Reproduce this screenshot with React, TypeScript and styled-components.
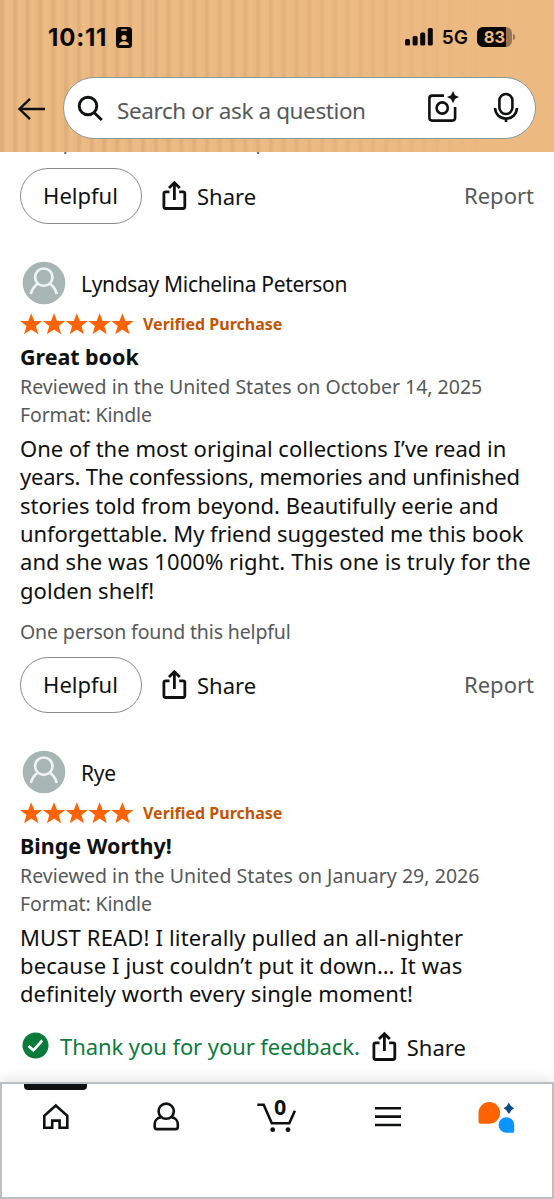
import React from "react";
import styled, { createGlobalStyle } from "styled-components";

const sans = '"Noto Sans", "Open Sans", sans-serif';

const Global = createGlobalStyle`
  * { box-sizing: border-box; }
  body { margin: 0; background: #fff; font-family: ${sans}; color: #0f1111; }
  button { font: inherit; color: inherit; background: none; border: 0; padding: 0; }
`;

const Screen = styled.div`
  width: 554px;
  height: 1199px;
  display: flex;
  flex-direction: column;
  overflow: hidden;
  background: #fff;
`;

const Header = styled.header`
  flex: none;
  height: 152px;
  background:
    linear-gradient(90deg, rgba(236, 185, 129, 0) 0%, rgba(236, 185, 129, 0.3) 50%, rgba(236, 185, 129, 0.92) 88%, #ecb981 100%),
    repeating-linear-gradient(90deg, #e4b37d 0px, #dfad78 1px, #dfad78 3.2px, #e8b781 4.4px, #edbd86 7px, #ebba83 9px, #e9b781 12.8px);
`;

const StatusBar = styled.div`
  height: 77px;
  padding: 0 39px 3px 48px;
  display: flex;
  align-items: center;
  justify-content: space-between;
  color: #0a0704;
`;

const StatusGroup = styled.div`
  display: flex;
  align-items: center;
`;

const Clock = styled.span`
  width: 61px;
  margin-right: 7px;
  padding-top: 1px;
  font: 700 24px/28px Inter, sans-serif;
  letter-spacing: 0.8px;
  white-space: nowrap;
`;

const Network = styled.span`
  margin: 0 9px;
  padding-top: 1px;
  font: 600 19px/24px Inter, sans-serif;
`;

const Battery = styled.div`
  width: 35px;
  height: 20px;
  border-radius: 6px;
  background: linear-gradient(90deg, #0a0704 83%, #987654 83%);
  color: #ecb981;
  font: 700 16.5px/20px Inter, sans-serif;
  text-align: center;
`;

const BatteryTip = styled.i`
  width: 2px;
  height: 6px;
  margin-left: 1px;
  border-radius: 0 2px 2px 0;
  background: #987654;
`;

const SearchRow = styled.div`
  display: flex;
  align-items: center;
  padding: 0 18px 0 17px;
`;

const SearchBox = styled.div`
  width: 474px;
  height: 62px;
  margin-left: 17px;
  padding: 0 16px 0 13px;
  border: 1px solid #8a9a98;
  border-radius: 31px;
  background: #fff;
  display: flex;
  align-items: center;
`;

const Placeholder = styled.span`
  flex: 1;
  margin-left: 13px;
  padding-top: 5px;
  font-size: 22.5px;
  line-height: 30px;
  letter-spacing: -0.4px;
  color: #565959;
  white-space: nowrap;
`;

const Icon = styled.svg`
  display: block;
  flex: none;
  overflow: visible;
`;

const MicIcon = styled(Icon)`
  margin-left: 34px;
`;

const BackIcon = styled(Icon)`
  margin-top: 1px;
`;

const Feed = styled.main`
  flex: 1;
  min-height: 0;
  padding: 0 20px;
  overflow: hidden;
`;

const Line = styled.div<{ $ls?: number }>`
  white-space: nowrap;
  letter-spacing: ${(p) => p.$ls ?? 0}px;
`;

const HelpfulCount = styled(Line)`
  height: 28px;
  font-size: 19.5px;
  line-height: 28px;
  color: #565959;
`;

const Clipped = styled.div`
  height: 16px;
  overflow: hidden;
  display: flex;
  flex-direction: column;
  justify-content: flex-end;
  padding-bottom: 12px;
`;

const Actions = styled.div`
  display: flex;
  align-items: center;
  height: 56px;
`;

const Pill = styled.button`
  && {
    width: 122px;
    height: 56px;
    border: 1px solid #888c8c;
    border-radius: 28px;
    font-size: 22px;
    line-height: 30px;
    padding: 0 1px 2px 0;
  }
`;

const ShareButton = styled.button<{ $gap: number }>`
  && {
    display: flex;
    align-items: center;
    gap: 10px;
    margin-left: ${(p) => p.$gap}px;
    font-size: 22px;
    line-height: 30px;
  }
`;

const Report = styled.button`
  && {
    margin-left: auto;
    font-size: 22px;
    line-height: 30px;
    color: #565959;
    padding-bottom: 2px;
  }
`;

const Review = styled.article`
  display: flex;
  flex-direction: column;
`;

const Author = styled.div`
  display: flex;
  align-items: center;
  height: 44px;
  margin-top: 37px;
  padding-left: 2px;
  gap: 15px;
  font-size: 21px;
`;

const AuthorName = styled(Line)`
  padding-top: 2px;
`;

const Rating = styled.div`
  display: flex;
  align-items: center;
  height: 26px;
  margin-top: 6px;
`;

const Verified = styled(Line)`
  margin-left: 10px;
  font-size: 16px;
  font-weight: 700;
  color: #c45500;
`;

const Title = styled(Line)`
  margin-top: 5px;
  height: 31px;
  font-size: 21.5px;
  line-height: 30px;
  font-weight: 700;
`;

const Meta = styled(Line)`
  height: 28.4px;
  font-size: 19.5px;
  line-height: 28.4px;
  color: #565959;
`;

const Body = styled.div`
  margin-top: 4px;
  font-size: 22px;
  line-height: 28.4px;
`;

const Thanks = styled(Line)`
  margin-left: 11px;
  font-size: 22px;
  line-height: 30px;
  color: #0b7b3c;
`;

const TabBar = styled.nav`
  flex: none;
  height: 117px;
  border: 2px solid #babfc5;
  box-shadow: 0 -3px 12px rgba(0, 0, 0, 0.1);
  background: #fff;
  display: grid;
  grid-template-columns: repeat(5, 1fr);
  position: relative;
`;

const Tab = styled.button`
  && {
    display: flex;
    justify-content: center;
    align-items: flex-start;
    padding-top: 13px;
  }
`;

const ActiveMark = styled.i`
  position: absolute;
  left: 22px;
  top: 0;
  width: 63px;
  height: 6px;
  background: #0f1111;
  border-radius: 0 0 4px 4px;
`;

const ShareIcon = () => (
  <Icon width="25" height="30" viewBox="0 0 25 30" fill="none" stroke="#0f1111" strokeWidth="2.8">
    <path d="M7.5 10.8H3.6Q1.9 10.8 1.9 12.5V25.8Q1.9 27.5 3.6 27.5H21.1Q22.8 27.5 22.8 25.8V12.5Q22.8 10.8 21.1 10.8H17.2" />
    <path d="M12.4 19V2M7 7L12.4 1.8L17.8 7" />
  </Icon>
);

const Avatar = () => (
  <Icon width="44" height="44" viewBox="0 0 44 44" fill="none">
    <circle cx="22" cy="22" r="21.3" fill="#a8b5b5" />
    <g stroke="#eef2f2" strokeWidth="2.7">
      <circle cx="21.8" cy="16.2" r="8.7" />
      <path d="M8.8 33C10.2 28 12.8 24.6 16.2 22.4M27.4 22.4C30.8 24.6 33.4 28 34.8 33" />
    </g>
  </Icon>
);

const Stars = () => (
  <Icon width="113" height="22" viewBox="0 0 113 22" fill="#ff6200">
    {[0, 1, 2, 3, 4].map((i) => (
      <path
        key={i}
        transform={`translate(${i * 22.8} 0)`}
        d="M11.2 .2L14.2 8H22.3L15.9 13L18.3 21.2L11.2 16.4L4.1 21.2L6.5 13L.1 8H8.2Z"
      />
    ))}
  </Icon>
);

type Text = [string, number];

interface ReviewData {
  author: Text;
  title: Text;
  date: Text;
  body: Text[];
}

const reviews: ReviewData[] = [
  {
    author: ["Lyndsay Michelina Peterson", -0.32],
    title: ["Great book", -0.05],
    date: ["Reviewed in the United States on October 14, 2025", 0],
    body: [
      ["One of the most original collections I’ve read in", 0.02],
      ["years. The confessions, memories and unfinished", -0.21],
      ["stories told from beyond. Beautifully eerie and", -0.01],
      ["unforgettable. My friend suggested me this book", -0.07],
      ["and she was 1000% right. This one is truly for the", 0.08],
      ["golden shelf!", 0.05],
    ],
  },
  {
    author: ["Rye", -0.2],
    title: ["Binge Worthy!", 0],
    date: ["Reviewed in the United States on January 29, 2026", 0.05],
    body: [
      ["MUST READ! I literally pulled an all-nighter", 0.16],
      ["because I just couldn’t put it down… It was", 0.12],
      ["definitely worth every single moment!", 0.04],
    ],
  },
];

const ReviewBlock = ({ data }: { data: ReviewData }) => (
  <Review>
    <Author>
      <Avatar />
      <AuthorName $ls={data.author[1]}>{data.author[0]}</AuthorName>
    </Author>
    <Rating>
      <Stars />
      <Verified>Verified Purchase</Verified>
    </Rating>
    <Title $ls={data.title[1]}>{data.title[0]}</Title>
    <Meta $ls={data.date[1]}>{data.date[0]}</Meta>
    <Meta $ls={-0.13}>Format: Kindle</Meta>
    <Body>
      {data.body.map(([text, ls]) => (
        <Line key={text} $ls={ls}>{text}</Line>
      ))}
    </Body>
  </Review>
);

const ReviewActions = () => (
  <Actions>
    <Pill>Helpful</Pill>
    <ShareButton $gap={20}>
      <ShareIcon />
      Share
    </ShareButton>
    <Report>Report</Report>
  </Actions>
);

const Count = styled(HelpfulCount)`
  margin: 13.6px 0 11px;
`;

const Feedback = styled.div`
  display: flex;
  align-items: center;
  height: 40px;
  margin-top: 18px;
  padding-left: 2px;
`;

const FeedbackShare = styled.div`
  padding-top: 3px;
`;

export default function App() {
  return (
    <Screen>
      <Global />
      <Header>
        <StatusBar>
          <StatusGroup>
            <Clock>10:11</Clock>
            <Icon width="16" height="21" viewBox="0 0 16 21">
              <rect width="16" height="21" rx="3.5" fill="#0a0704" />
              <rect x="5" y="2.2" width="6" height="1.5" rx=".7" fill="#ecb981" />
              <circle cx="8" cy="10.5" r="2.6" fill="#ecb981" />
              <path d="M3 18C3.3 15.5 5.3 14.2 8 14.2S12.7 15.5 13 18Z" fill="#ecb981" />
            </Icon>
          </StatusGroup>
          <StatusGroup>
            <Icon width="28" height="18" viewBox="0 0 28 18" fill="#0a0704">
              <rect x="0" y="11" width="5" height="6.5" rx="1.5" />
              <rect x="7.6" y="8" width="5" height="9.5" rx="1.5" />
              <rect x="15.2" y="4.5" width="5" height="13" rx="1.5" />
              <rect x="22.8" y="0" width="5" height="17.5" rx="1.5" />
            </Icon>
            <Network>5G</Network>
            <Battery>83</Battery>
            <BatteryTip />
          </StatusGroup>
        </StatusBar>
        <SearchRow>
          <BackIcon width="29" height="24" viewBox="0 0 29 24" fill="none" stroke="#0f1111" strokeWidth="2.4">
            <path d="M28 12H2.5M13 1.8L2.5 12L13 22.2" />
          </BackIcon>
          <SearchBox>
            <Icon width="27" height="26" viewBox="0 0 27 26" fill="none" stroke="#0f1111" strokeWidth="2.9">
              <circle cx="11" cy="11" r="8.8" />
              <path d="M17 17.5L24.8 25" />
            </Icon>
            <Placeholder>Search or ask a question</Placeholder>
            <Icon width="32" height="32" viewBox="0 0 32 32" fill="none" stroke="#0f1111" strokeWidth="2.6">
              <path d="M17 3.6H5.2Q2.4 3.6 2.4 6.4V25.8Q2.4 28.6 5.2 28.6H25.3Q28.1 28.6 28.1 25.8V15" />
              <circle cx="15.2" cy="16" r="5.6" />
              <path stroke="none" fill="#0f1111" d="M26 -1L28 3.3L32 5L28 6.9L26 11.2L24 6.9L20 5L24 3.3Z" />
            </Icon>
            <MicIcon width="26" height="32" viewBox="0 0 26 32" fill="none" stroke="#0f1111" strokeWidth="2.6">
              <rect x="6.4" y="2" width="13" height="20" rx="6.5" />
              <path d="M2 16C2.5 22.5 7 26.5 13 26.5S23.5 22.5 24 16M13 26.5V30" />
            </MicIcon>
          </SearchBox>
        </SearchRow>
      </Header>
      <Feed>
        <Clipped>
          <HelpfulCount $ls={-0.14}>One person found this helpful</HelpfulCount>
        </Clipped>
        <ReviewActions />
        <ReviewBlock data={reviews[0]} />
        <Count $ls={-0.14}>One person found this helpful</Count>
        <ReviewActions />
        <ReviewBlock data={reviews[1]} />
        <Feedback>
          <Icon width="27" height="27" viewBox="0 0 27 27" fill="none">
            <circle cx="13.5" cy="13.5" r="13" fill="#0b7b3c" />
            <path d="M6.5 14L11.3 18.3L20.3 8.5" stroke="#fff" strokeWidth="2.6" />
          </Icon>
          <Thanks $ls={-0.07}>Thank you for your feedback.</Thanks>
          <FeedbackShare>
            <ShareButton $gap={12}>
              <ShareIcon />
              Share
            </ShareButton>
          </FeedbackShare>
        </Feedback>
      </Feed>
      <TabBar>
        <ActiveMark />
        <Tab aria-label="Home">
          <Icon width="32" height="36" viewBox="0 0 32 36" fill="none" stroke="#0f1111" strokeWidth="2.6">
            <path d="M3.3 30.8V18.8L14.8 8.6L26.3 18.8V30.8H18.6V23.6H11.2V30.8Z" />
          </Icon>
        </Tab>
        <Tab aria-label="Account">
          <Icon width="32" height="36" viewBox="0 0 32 36" fill="none" stroke="#0f1111" strokeWidth="2.6">
            <circle cx="15.2" cy="14.2" r="7.6" />
            <path d="M9.8 20.4C6.4 20.8 3.7 23.5 3.7 27V30Q3.7 32.1 5.8 32.1H24.7Q26.8 32.1 26.8 30V27C26.8 23.5 24.1 20.8 20.6 20.4" />
          </Icon>
        </Tab>
        <Tab aria-label="Cart">
          <Icon width="40" height="36" viewBox="0 0 40 36" fill="none" stroke="#0f1111" strokeWidth="2.6">
            <path d="M.3 7.7H6.7L14.8 26.3H32.3L37.9 13.8" />
            <circle cx="15.7" cy="32.7" r="2.4" fill="#0f1111" stroke="none" />
            <circle cx="31" cy="32.7" r="2.4" fill="#0f1111" stroke="none" />
            <text x="23.2" y="18.2" textAnchor="middle" fontFamily={sans} fontSize="21.5" fontWeight="700" fill="#0f1111" stroke="none">0</text>
          </Icon>
        </Tab>
        <Tab aria-label="Menu">
          <Icon width="32" height="36" viewBox="0 0 32 36" fill="none" stroke="#0f1111" strokeWidth="2.6">
            <path d="M4 11.3H30M4 19.6H30M4 28H30" />
          </Icon>
        </Tab>
        <Tab aria-label="Assistant">
          <Icon width="40" height="36" viewBox="0 0 40 36">
            <path fill="#ff6200" d="M1.5 16A10.8 10.8 0 1 1 12.3 26.7H3.5Q1.5 26.7 1.5 24.7Z" />
            <path fill="#0a94ff" d="M37.2 27.8A7.8 7.8 0 1 0 29.4 35.8H35.7Q37.2 35.8 37.2 34.3Z" />
            <path fill="#0b4a80" d="M31.9 5.6Q33.4 9.7 37.2 11.2Q33.4 12.8 31.9 16.9Q30.4 12.8 26.6 11.2Q30.4 9.7 31.9 5.6Z" />
          </Icon>
        </Tab>
      </TabBar>
    </Screen>
  );
}
